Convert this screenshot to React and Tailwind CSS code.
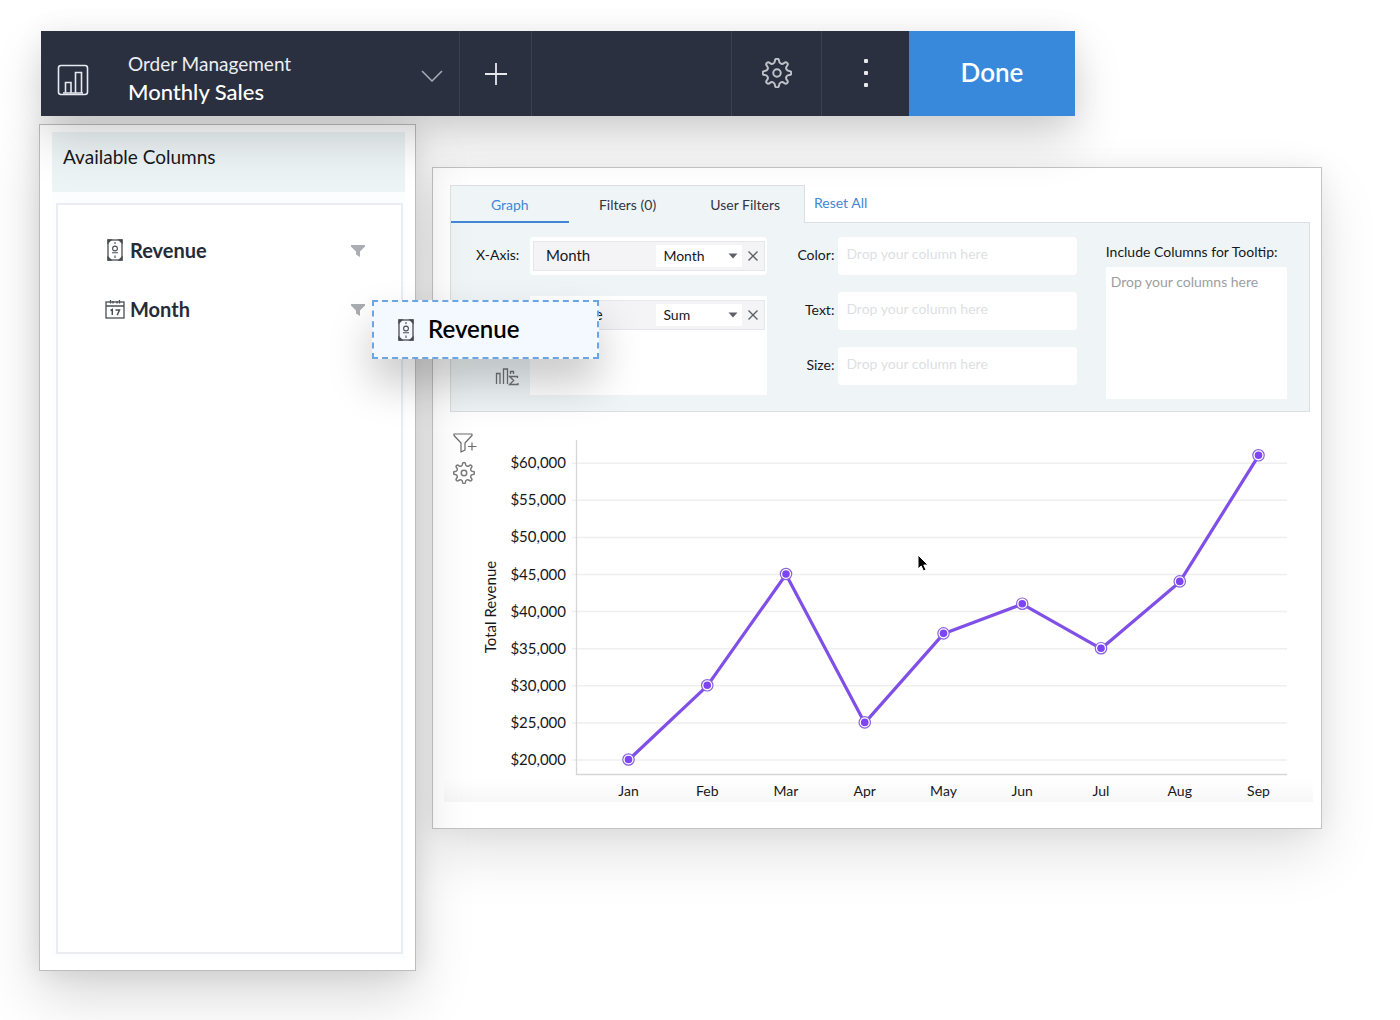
import { useState } from "react";

const SALES = [
    { month: "Jan", value: 20000 },
    { month: "Feb", value: 30000 },
    { month: "Mar", value: 45000 },
    { month: "Apr", value: 25000 },
    { month: "May", value: 37000 },
    { month: "Jun", value: 41000 },
    { month: "Jul", value: 35000 },
    { month: "Aug", value: 44000 },
    { month: "Sep", value: 61000 },
];

const TICKS = [60000, 55000, 50000, 45000, 40000, 35000, 30000, 25000, 20000];

// chart scales
const xAt = (i) => 148.5 + i * 78.75;
const yAt = (value) => 348 - ((value - 20000) / 5000) * 37.1;

// gear outline with softened corners
function gearPath(teeth, outer, inner) {
    const pts = [];
    const step = (Math.PI * 2) / teeth;
    const at = (r, a) => [12 + r * Math.sin(a), 12 - r * Math.cos(a)];
    for (let i = 0; i < teeth; i++) {
        const a = i * step;
        pts.push(at(inner, a - step * 0.27));
        pts.push(at(outer, a - step * 0.17));
        pts.push(at(outer, a + step * 0.17));
        pts.push(at(inner, a + step * 0.27));
    }
    const fmt = ([x, y]) => `${x.toFixed(2)} ${y.toFixed(2)}`;
    const mid = (p, q) => [(p[0] + q[0]) / 2, (p[1] + q[1]) / 2];
    const last = pts[pts.length - 1];
    const curves = pts.map((p, i) => `Q${fmt(p)} ${fmt(mid(p, pts[(i + 1) % pts.length]))}`);
    return `M${fmt(mid(last, pts[0]))}${curves.join("")}Z`;
}

function GearIcon({ className }) {
    return (
        <svg viewBox="0 0 24 24" className={className} fill="none" stroke="currentColor" strokeWidth="1.6" strokeLinejoin="round">
            <path d={gearPath(8, 11.6, 8.2)} />
            <circle cx="12" cy="12" r="3" />
        </svg>
    );
}

function ReportIcon() {
    return (
        <svg width="32" height="32" viewBox="0 0 32 32" fill="none" stroke="#e6e9ef" strokeWidth="1.6">
            <rect x="1.5" y="1.5" width="29" height="29" rx="2.5" />
            <path d="M8.500 29V18.500h5.500V29M18.500 29V8.500h6V29M6 29h20" />
        </svg>
    );
}

function MoneyIcon() {
    return (
        <svg width="16" height="22" viewBox="0 0 16 22" fill="none" stroke="#4a4d53" strokeWidth="1.3">
            <rect x="1" y="1" width="14" height="20" />
            <path d="M1 1h3L1 4zM15 1v3l-3-3zM1 21v-3l3 3zM15 21h-3l3-3z" fill="#3b3e45" />
            <circle cx="8" cy="9.500" r="2.400" strokeWidth="1.1" />
            <path d="M5 13.800h6M8 3v2M8 16.500v2.500" strokeWidth="1.1" />
        </svg>
    );
}

function CalendarIcon() {
    return (
        <svg width="20" height="20" viewBox="0 0 20 20" fill="none" stroke="#4a4d53" strokeWidth="1.3">
            <rect x="1" y="3" width="18" height="16" />
            <path d="M1 7h18M5.500 4.500V1M8 4.500V2M12 4.500V2M14.500 4.500V1" />
            <path d="M5.500 11.500l1.800-1V16M10.500 11h4l-2.300 5.200" strokeWidth="1.5" />
        </svg>
    );
}

function FunnelIcon() {
    return (
        <svg width="14" height="12" viewBox="0 0 14 12" fill="#aaadb1">
            <path d="M0 0h14v1.500L9 6.500V12L5 9.500v-3L0 1.500z" />
        </svg>
    );
}

function AddFilterIcon() {
    return (
        <svg width="24" height="20" viewBox="0 0 24 20" fill="none" stroke="#6b6b6b" strokeWidth="1.2" strokeLinejoin="round">
            <path d="M1 1h18v1.500L12 10v7l-4 2V10L1 2.500zM19 9.500v8M15 13.500h8.500" />
        </svg>
    );
}

function AggregateIcon() {
    return (
        <svg width="24" height="18" viewBox="0 0 24 18" fill="none" stroke="#6f7376" strokeWidth="1.3">
            <path d="M1.500 16V5.500h3.500V16M8.500 16V1h4v15M15.500 6V3.500h3V6" />
            <path d="M22.500 10V8.500h-8l4.200 4-4.200 4h8.500V15" />
        </svg>
    );
}

function Header() {
    return (
        <header className="relative z-20 mr-[247px] flex h-[85px] bg-[#2a3040] text-white shadow-[0_24px_48px_rgba(0,0,0,0.17),0_0_30px_rgba(0,0,0,0.06)]">
            <button className="flex w-[419px] items-center border-r border-[#3b4151] pl-4 text-left">
                <span className="mt-3"><ReportIcon /></span>
                <span className="ml-[39px] mt-2 flex-1">
                    <span className="block text-[19px] leading-7 text-[#eceef2]">Order Management</span>
                    <span className="block text-[22px] leading-7 font-medium">Monthly Sales</span>
                </span>
                <svg width="22" height="12" viewBox="0 0 22 12" className="mt-1 mr-4" fill="none" stroke="#a5a9b2" strokeWidth="1.6">
                    <path d="M1 1l10 10L21 1" />
                </svg>
            </button>
            <button aria-label="Add" className="flex w-[72px] items-center justify-center border-r border-[#3b4151]">
                <svg width="24" height="24" viewBox="0 0 24 24" stroke="#e6e8ec" strokeWidth="1.8">
                    <path d="M12 1v22M1 12h22" />
                </svg>
            </button>
            <div className="flex-1"></div>
            <button aria-label="Settings" className="flex w-[91px] items-center justify-center border-x border-[#3b4151] pb-[2px]">
                <GearIcon className="h-[30px] w-[30px] text-[#bfc2c8]" />
            </button>
            <button aria-label="More" className="flex w-[87px] items-center justify-center pb-[2px]">
                <svg width="6" height="30" viewBox="0 0 6 30" fill="#e6e8ec">
                    <rect x="1" y="1" width="4" height="4" rx="1" />
                    <rect x="1" y="13" width="4" height="4" rx="1" />
                    <rect x="1" y="25" width="4" height="4" rx="1" />
                </svg>
            </button>
            <button className="w-[166px] bg-[#3888db] pb-[2px] text-[26px] font-semibold">Done</button>
        </header>
    );
}

function ColumnItem({ icon, name }) {
    return (
        <li className="flex h-[59px] items-center">
            <span className="flex w-6 justify-center">{icon}</span>
            <span className="ml-[3px] flex-1 text-[20px] font-bold text-[#262b38]">{name}</span>
            <button aria-label={`Filter ${name}`} className="pt-[2px]"><FunnelIcon /></button>
        </li>
    );
}

function ColumnsPanel() {
    return (
        <aside className="relative z-10 flex min-h-[847px] w-[377px] shrink-0 flex-col border border-[#bdbdbd] bg-white pt-[7px] pr-[10px] pb-3 pl-3 shadow-[0_24px_54px_rgba(0,0,0,0.16),0_0_24px_rgba(0,0,0,0.09)]">
            <h2 className="h-[60px] bg-[#edf4f6] px-[11px] text-[19px] leading-[50px] text-[#16181c]">Available Columns</h2>
            <div className="flex flex-1 flex-col bg-[#fcfdfe] pt-[11px] pr-[2px] pb-1 pl-1">
                <ul className="flex-1 border-2 border-[#ebecf1] bg-white pt-[15px] pr-9 pl-[45px]">
                    <ColumnItem icon={<MoneyIcon />} name="Revenue" />
                    <ColumnItem icon={<CalendarIcon />} name="Month" />
                </ul>
            </div>
        </aside>
    );
}

function AxisField({ axis, column, options }) {
    return (
        <div className="flex h-[30px] items-center border border-[#e6e7eb] bg-[#f4f4f6] pl-3 text-[14px] text-[#16181c]">
            <span className="flex-1 pb-px text-[15px]">{column}</span>
            <span className="flex h-[22px] w-[86px] items-center bg-white pr-1">
                <select aria-label={`${axis} function`} className="min-w-0 flex-1 appearance-none bg-transparent pb-px pl-[7px] leading-5 outline-none">
                    {options.map((o) => <option key={o}>{o}</option>)}
                </select>
                <svg width="10" height="6" viewBox="0 0 10 6" className="pointer-events-none" fill="#5d6066"><path d="M0.500 0.500h9L5 5.500z" /></svg>
            </span>
            <button aria-label={`Remove ${column}`} className="flex w-[22px] justify-center">
                <svg width="10" height="10" viewBox="0 0 10 10" stroke="#5d6066" strokeWidth="1.4"><path d="M0.500 0.500l9 9M9.500 0.500l-9 9" /></svg>
            </button>
        </div>
    );
}

function DropField({ label }) {
    return (
        <label className="flex h-[38px] items-center text-[14px] text-[#16181c]">
            <span className="flex w-[42px] shrink-0 justify-end pr-1 pb-1">{label}:</span>
            <input
                type="text"
                placeholder="Drop your column here"
                className="h-full min-w-0 flex-1 rounded-sm bg-white px-2 pb-[6px] placeholder:text-[#dddfe3] outline-none"
            />
        </label>
    );
}

function GraphSettings() {
    const [tab, setTab] = useState("Graph");
    return (
        <section className="mr-[3px] ml-[6px]">
            <div className="flex">
                <div className="relative z-10 -mb-px flex h-[38px] w-[355px] border border-b-0 border-[#dcdfe1] bg-[#eff5f7]">
                    {["Graph", "Filters (0)", "User Filters"].map((name) => (
                        <button
                            key={name}
                            onClick={() => setTab(name)}
                            className={
                                name === tab
                                    ? "flex-1 border-b-2 border-[#4287d6] pt-[2px] text-[14px] text-[#4287d6]"
                                    : "flex-1 border-b-2 border-transparent pt-[2px] text-[14px] text-[#33363c]"
                            }
                        >
                            {name}
                        </button>
                    ))}
                </div>
                <a href="#reset" className="ml-[9px] text-[14px] leading-9 text-[#4287d6]">Reset All</a>
            </div>
            <div className="grid h-[190px] grid-cols-[291fr_280fr_181fr] gap-[29px] border border-[#dcdfe1] bg-[#eff5f7] pt-[14px] pr-[22px] pl-[25px]">
                <div className="grid grid-cols-[54px_1fr] content-start gap-y-[21px]">
                    <span className="text-[14px] leading-9 text-[#16181c]">X-Axis:</span>
                    <div className="h-[38px] rounded-sm bg-white py-1 pr-[2px] pl-[3px]">
                        <AxisField axis="X-Axis" column="Month" options={["Month", "Year"]} />
                    </div>
                    <span className="flex items-end justify-end pr-[11px] pb-[9px]"><AggregateIcon /></span>
                    <div className="h-[99px] bg-white py-1 pr-[2px] pl-[3px]">
                        <AxisField axis="Y-Axis" column="Revenue" options={["Sum", "Average"]} />
                    </div>
                </div>
                <div className="flex flex-col gap-[17px]">
                    <DropField label="Color" />
                    <DropField label="Text" />
                    <DropField label="Size" />
                </div>
                <label className="block text-[14px] text-[#16181c]">
                    <span className="block leading-[30px] whitespace-nowrap">Include Columns for Tooltip:</span>
                    <textarea
                        placeholder="Drop your columns here"
                        className="block h-[132px] w-full resize-none bg-white px-[5px] py-[5px] leading-5 placeholder:text-[#9c9ea1] outline-none"
                    />
                </label>
            </div>
        </section>
    );
}

function RevenueChart() {
    const line = SALES.map((d, i) => `${xAt(i)},${yAt(d.value)}`).join(" ");
    return (
        <svg viewBox="0 0 833 390" className="min-w-0 flex-1 text-[15px]" fill="#16181c">
            {TICKS.map((tick) => (
                <g key={tick}>
                    <line x1="92" x2="807" y1={yAt(tick)} y2={yAt(tick)} stroke="#efefef" strokeWidth="1.500" />
                    <text x="86" y={yAt(tick) + 5} textAnchor="end">${tick.toLocaleString("en-US")}</text>
                </g>
            ))}
            <path d="M96.500 28V362.500H807" fill="none" stroke="#d6d6d8" strokeWidth="1.300" />
            <text transform="translate(16 195) rotate(-90)" textAnchor="middle">Total Revenue</text>
            <polyline points={line} fill="none" stroke="#7f4fe8" strokeWidth="3.200" strokeLinejoin="round" />
            {SALES.map((d, i) => (
                <g key={d.month}>
                    <circle cx={xAt(i)} cy={yAt(d.value) - 0.500} r="5.700" fill="#fff" stroke="#8a62dd" strokeWidth="1.200" />
                    <circle cx={xAt(i)} cy={yAt(d.value) - 0.500} r="3.800" fill="#7d45f5" />
                    <text x={xAt(i)} y="384" textAnchor="middle" className="text-[14px]">{d.month}</text>
                </g>
            ))}
        </svg>
    );
}

function ReportPanel() {
    return (
        <main className="mt-[43px] min-w-0 flex-1 border border-[#c4c4c4] bg-white pt-[17px] pr-2 pb-[26px] pl-[11px] shadow-[0_24px_54px_rgba(0,0,0,0.12),0_0_24px_rgba(0,0,0,0.06)]">
            <GraphSettings />
            <div className="flex bg-linear-to-t from-[#f7f7f7] to-white to-6%">
                <div className="flex w-9 shrink-0 flex-col gap-[9px] pt-[21px] pl-[9px]">
                    <button aria-label="Add filter" className="h-5 w-6"><AddFilterIcon /></button>
                    <button aria-label="Chart settings" className="h-[22px] w-[22px]"><GearIcon className="h-[22px] w-[22px] text-[#7a7a7a]" /></button>
                </div>
                <RevenueChart />
            </div>
        </main>
    );
}

export default function App() {
    return (
        <div className="relative min-h-screen overflow-hidden bg-white pt-[31px] pr-[78px] pb-12 pl-[39px] font-[Lato,'Noto_Sans',sans-serif]">
            <div className="ml-[2px]">
                <Header />
            </div>
            <div className="relative mt-2 flex items-start gap-4">
                <ColumnsPanel />
                <ReportPanel />
                {/* column being dragged onto the Y axis */}
                <div className="absolute top-[176px] left-[333px] z-20 flex h-[59px] w-[227px] items-center border-2 border-dashed border-[#6ba5e3] bg-[#f4f9ff] pl-6 shadow-[0_24px_44px_rgba(0,0,0,0.22)]">
                    <MoneyIcon />
                    <span className="ml-[14px] pb-px text-[24px] font-semibold text-black">Revenue</span>
                </div>
                <svg width="12" height="18" viewBox="0 0 12 18" className="absolute top-[430px] left-[878px]" fill="#000" stroke="#fff" strokeWidth="1">
                    <path d="M1 1v14l3.200-3 2.300 5 2.500-1.200-2.200-4.800H11z" />
                </svg>
            </div>
        </div>
    );
}
